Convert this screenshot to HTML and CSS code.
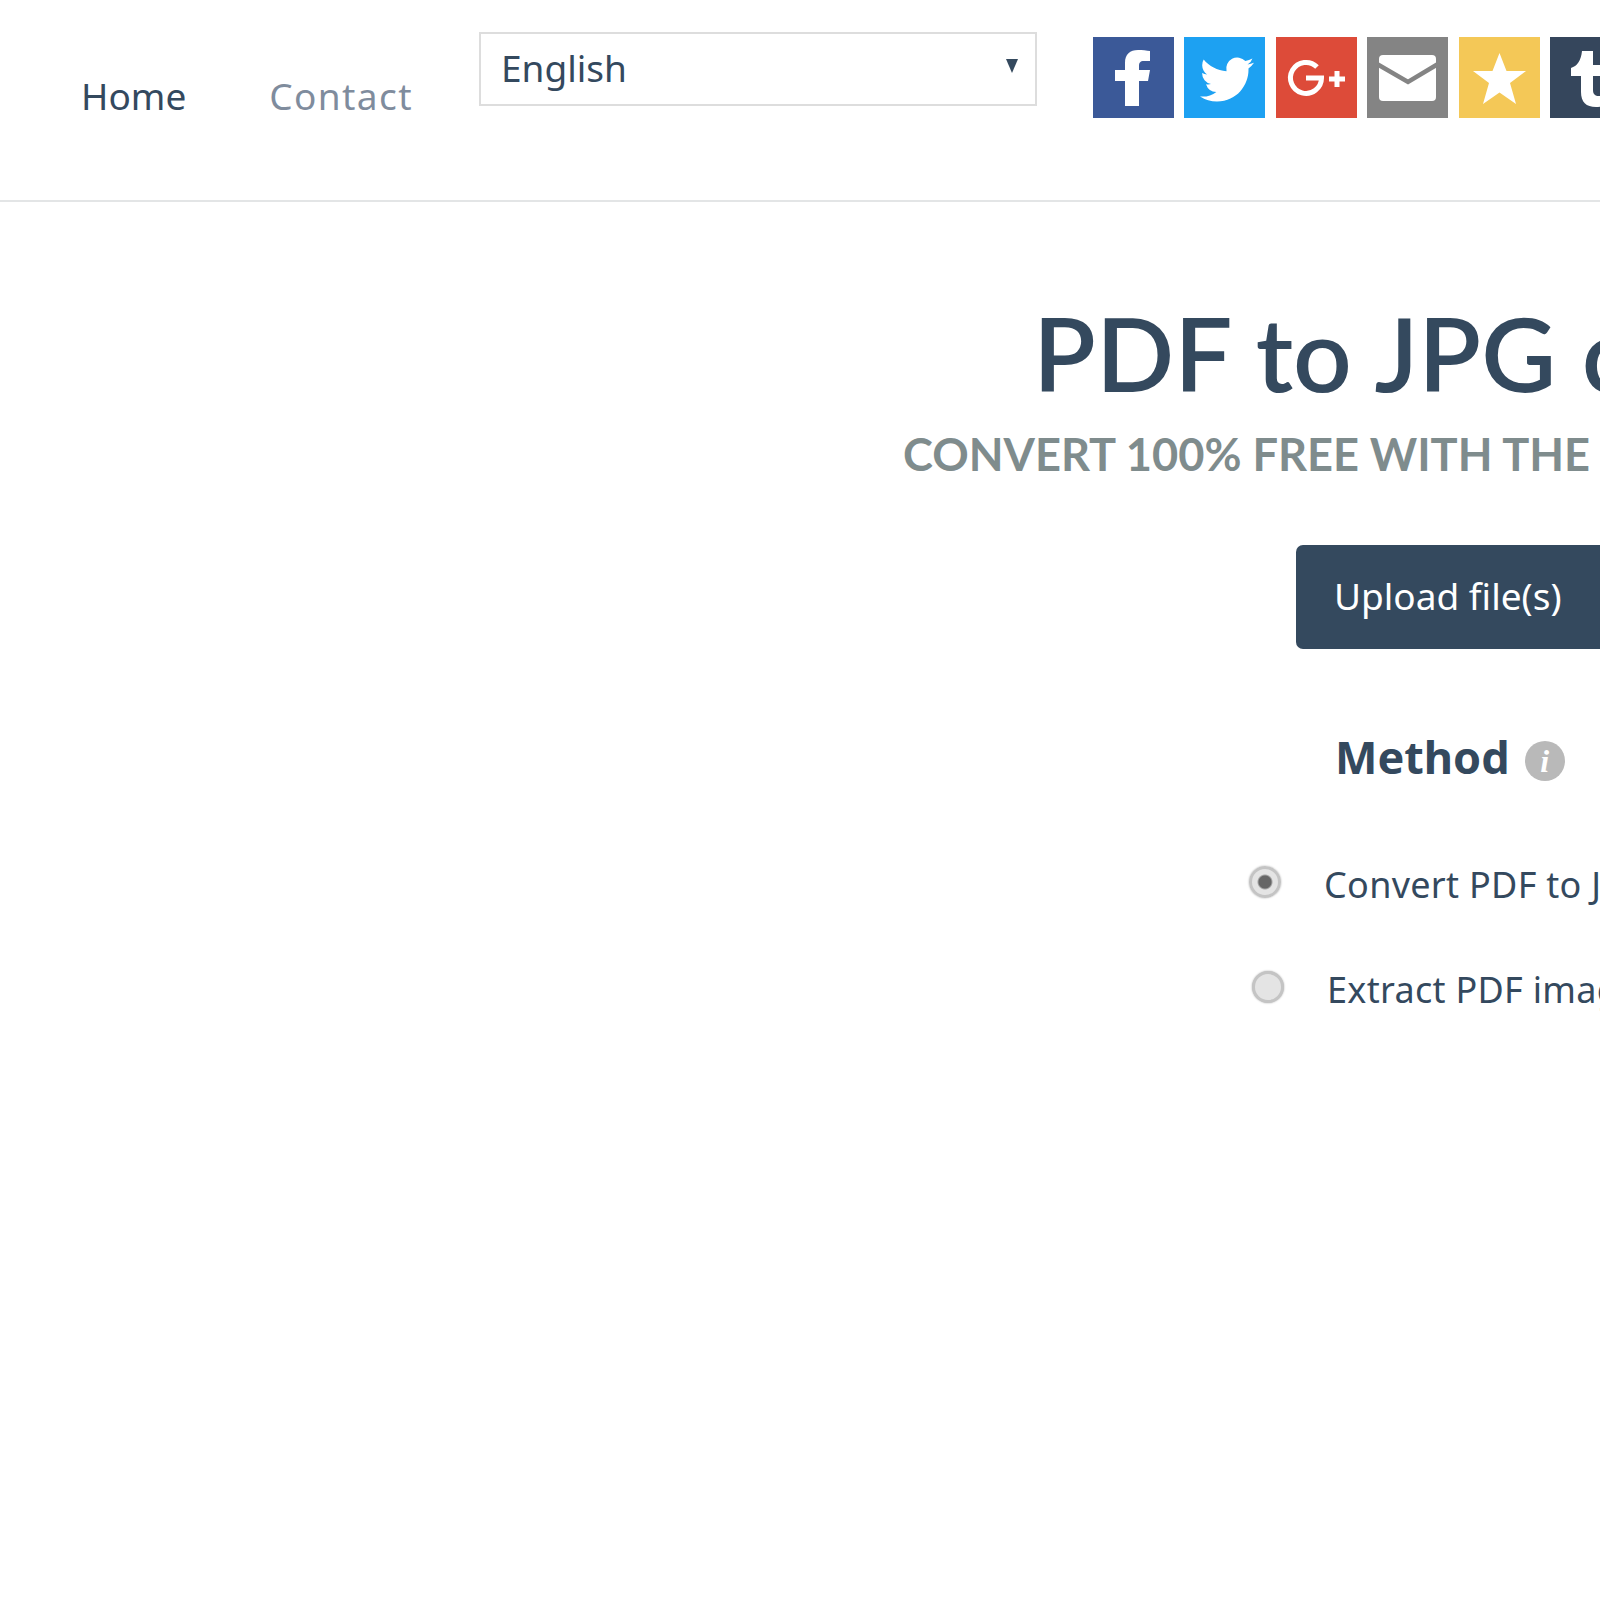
FILE: index.html
```html
<!DOCTYPE html>
<html lang="en">
<head>
    <meta charset="UTF-8">
    <meta name="viewport" content="width=device-width, initial-scale=1.0">
    <title>PDF to JPG converter</title>
    <link rel="stylesheet" href="styles.css">
</head>
<body>
    <div class="page">
        <header class="topbar">
            <nav class="nav">
                <a class="nav-link nav-active" href="#">Home</a>
                <a class="nav-link" href="#">Contact</a>
            </nav>
            <div class="lang-wrap">
                <select class="lang">
                    <option>English</option>
                </select>
            </div>
            <div class="share">
                <a class="share-btn fb" href="#">
                    <svg viewBox="0 0 81 81"><path d="M32 69V44H22V33h10v-7c0-9 5-13 13-13 4 0 9 .5 12 1v10h-6c-4 0-5 2-5 5v4h11l-2 11h-9v25z" fill="#fff"/></svg>
                </a>
                <a class="share-btn tw" href="#">
                    <svg viewBox="0 0 81 81"><path transform="translate(16 15.500) scale(2.250)" d="M23.953 4.570a10 10 0 0 1-2.825.775 4.958 4.958 0 0 0 2.163-2.723c-.951.555-2.005.959-3.127 1.184a4.920 4.920 0 0 0-8.384 4.482C7.690 8.095 4.067 6.130 1.640 3.162a4.822 4.822 0 0 0-.666 2.475c0 1.710.870 3.213 2.188 4.096a4.904 4.904 0 0 1-2.228-.616v.060a4.923 4.923 0 0 0 3.946 4.827 4.996 4.996 0 0 1-2.212.085 4.936 4.936 0 0 0 4.604 3.417 9.867 9.867 0 0 1-6.102 2.105c-.390 0-.779-.023-1.170-.067a13.995 13.995 0 0 0 7.557 2.209c9.053 0 13.998-7.496 13.998-13.985 0-.210 0-.420-.015-.630A9.935 9.935 0 0 0 24 4.590z" fill="#fff"/></svg>
                </a>
                <a class="share-btn gp" href="#">
                    <svg viewBox="0 0 81 81"><path d="M41 30A15.500 15.500 0 1 0 45.500 41H30" fill="none" stroke="#fff" stroke-width="5"/><path d="M61 34v16M53 42h16" fill="none" stroke="#fff" stroke-width="5"/></svg>
                </a>
                <a class="share-btn mail" href="#">
                    <svg viewBox="0 0 81 81"><rect x="12" y="18" width="57" height="46" rx="4" fill="#fff"/><path d="M10 27l31 18 30-18" fill="none" stroke="#848484" stroke-width="4.500"/></svg>
                </a>
                <a class="share-btn fav" href="#">
                    <svg viewBox="0 0 81 81"><path d="M40.500 16l7 18H67L51 46l6 21-16.500-11.500L24 67l6-21-16-12h19.500z" fill="#fff"/></svg>
                </a>
                <a class="share-btn tb" href="#">
                    <svg viewBox="0 0 81 81"><path d="M32 14h11v14h14v11H43v14c0 4 2 6 6 6 3 0 6-1 8-2v10c-3 2-7 3-11 3-10 0-15-5-15-15V39H21v-8c6-2 10-7 11-17z" fill="#fff"/></svg>
                </a>
            </div>
        </header>

        <main class="content">
            <h1 class="title">PDF to JPG converter</h1>
            <h2 class="subtitle">Convert 100% free with the best tool</h2>
            <button class="upload" type="button">Upload file(s)</button>
            <section class="method">
                <h3 class="method-title">Method <span class="info">i</span></h3>
                <label class="option option-first">
                    <input type="radio" name="method" checked>
                    <span>Convert PDF to JPG</span>
                </label>
                <label class="option option-second">
                    <input type="radio" name="method">
                    <span>Extract PDF images</span>
                </label>
            </section>
        </main>
    </div>
</body>
</html>
```

FILE: styles.css
```css
html, body {
    margin: 0;
    padding: 0;
    background: #fff;
    overflow: hidden;
}
body {
    width: 1600px;
    height: 1600px;
    font-family: "Noto Sans", sans-serif;
    color: #34495e;
}
.page {
    width: 3200px;
}
.topbar {
    display: flex;
    align-items: flex-start;
    height: 200px;
    border-bottom: 2px solid #e3e5e6;
}
.nav {
    display: flex;
    gap: 83px;
    padding: 73px 0 0 81px;
    width: 398px;
}
.nav-link {
    font-size: 37px;
    line-height: 46px;
    letter-spacing: 1.400px;
    color: #7f8c9d;
    text-decoration: none;
}
.nav-active {
    letter-spacing: 0;
    color: #34495e;
}
.lang-wrap {
    position: relative;
    margin-top: 32px;
}
.lang-wrap::after {
    content: "";
    position: absolute;
    top: 27px;
    right: 19px;
    border-top: 14px solid #34495e;
    border-left: 6.500px solid transparent;
    border-right: 6.500px solid transparent;
}
.lang {
    display: block;
    appearance: none;
    width: 558px;
    height: 74px;
    padding: 0 20px 4px;
    border: 2px solid #ddd;
    border-radius: 0;
    background: #fff;
    font-family: inherit;
    font-size: 37px;
    color: #34495e;
}
.share {
    display: flex;
    gap: 10.400px;
    margin: 37px 0 0 56px;
}
.share-btn {
    display: block;
    width: 81px;
    height: 81px;
}
.share-btn svg {
    display: block;
    width: 81px;
    height: 81px;
}
.fb { background: #3b5998; }
.tw { background: #1da1f2; }
.gp { background: #dd4b39; }
.mail { background: #848484; }
.fav { background: #f4c857; }
.tb { background: #35465c; }

.content {
    display: flex;
    flex-direction: column;
    align-items: flex-start;
}
.title {
    margin: 85px 0 0 1033px;
    font-family: Lato, sans-serif;
    font-weight: 600;
    font-size: 103px;
    line-height: 130px;
    white-space: nowrap;
    color: #34495e;
}
.subtitle {
    margin: 7px 0 0 903px;
    font-family: Lato, sans-serif;
    font-weight: 700;
    font-size: 45.200px;
    line-height: 60px;
    text-transform: uppercase;
    white-space: nowrap;
    color: #7f8c8d;
}
.upload {
    margin: 61px 0 0 1296px;
    padding: 0 60px 4px 38px;
    height: 104px;
    border: none;
    border-radius: 7px;
    background: #34495e;
    color: #fff;
    font-family: "Noto Sans", sans-serif;
    font-size: 37px;
    white-space: nowrap;
}
.method {
    margin-left: 1249px;
    padding-top: 78px;
}
.method-title {
    display: flex;
    align-items: center;
    gap: 15px;
    margin: 0 0 0 86px;
    font-size: 45px;
    line-height: 60px;
    font-weight: 700;
}
.info {
    display: flex;
    align-items: center;
    justify-content: center;
    width: 40px;
    height: 40px;
    margin-top: 8px;
    border-radius: 50%;
    background: #b9b9b9;
    color: #fff;
    font-family: "Liberation Serif", serif;
    font-style: italic;
    font-weight: 700;
    font-size: 32px;
    line-height: 40px;
}
.option {
    display: flex;
    align-items: center;
    gap: 43px;
    font-size: 36px;
    line-height: 50px;
    letter-spacing: .3px;
    white-space: nowrap;
}
.option-first {
    margin-top: 73px;
}
.option-second {
    margin-top: 55px;
    margin-left: 3px;
}
.option input {
    appearance: none;
    width: 32px;
    height: 32px;
    margin: -6px 0 0;
    border: 3px solid #c4c4c4;
    border-radius: 50%;
    background: #e4e4e4;
    box-shadow: 0 0 2px #aaa;
    box-sizing: border-box;
}
.option input:checked {
    background: radial-gradient(circle, #666 0 6px, #e4e4e4 8px);
}
```
